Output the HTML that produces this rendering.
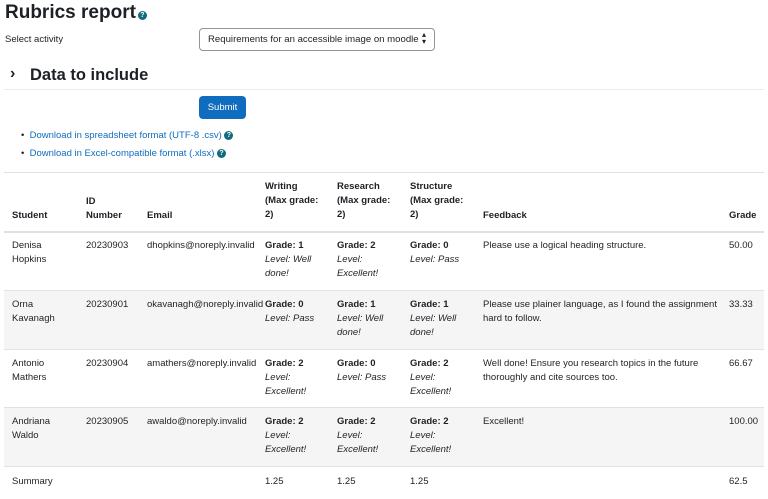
<!DOCTYPE html>
<html><head><style>
*{margin:0;padding:0;box-sizing:border-box}
body{width:768px;height:499px;overflow:hidden;background:#fff;font-family:"Liberation Sans",sans-serif;color:#1d2125;font-size:9.5px;position:relative}
.a{position:absolute;white-space:nowrap;line-height:14px}
b{font-weight:bold}
i{font-style:italic}
.hl{position:absolute;left:4px;width:760px;height:1px;background:#dee2e6}
.bg{position:absolute;left:4px;width:760px;background:#f5f5f5}
.q{display:inline-block;width:9px;height:9px;border-radius:50%;background:#0f6c7e;color:#fff;font-size:7px;line-height:9px;text-align:center;font-weight:bold;vertical-align:middle}
a{color:#0f6cbf;text-decoration:none}
</style></head><body>
<div class="a" style="left:5px;top:1px;font-size:19px;line-height:24px;font-weight:bold">Rubrics report<span class="q" style="margin-left:2px;vertical-align:1px">?</span></div>
<div class="a" style="left:5px;top:33px">Select activity</div>
<div style="position:absolute;left:199px;top:28px;width:236px;height:23px;border:1px solid #8f959e;border-radius:4px"></div>
<div class="a" style="left:208px;top:33px;font-size:9.6px">Requirements for an accessible image on moodle</div>
<div class="a" style="left:422px;top:31px;font-size:8px;line-height:8px">▴</div>
<div class="a" style="left:422px;top:38px;font-size:8px;line-height:8px">▾</div>
<div class="a" style="left:10px;top:63px;font-size:16px;line-height:22px;font-weight:bold">›</div>
<div class="a" style="left:30px;top:64px;font-size:16.5px;line-height:22px;font-weight:bold">Data to include</div>
<div class="hl" style="top:89px;background:#e9ecef"></div>
<div style="position:absolute;left:199px;top:96px;width:47px;height:23px;background:#0f6cbf;border-radius:4px;color:#fff;text-align:center;line-height:23px">Submit</div>
<div class="a" style="left:21px;top:129px">•&nbsp;&nbsp;<a>Download in spreadsheet format (UTF-8 .csv)</a> <span class="q">?</span></div>
<div class="a" style="left:21px;top:147px">•&nbsp;&nbsp;<a>Download in Excel-compatible format (.xlsx)</a> <span class="q">?</span></div>
<div class="hl" style="top:172px"></div>
<div class="hl" style="top:231px;height:2px"></div>
<div class="bg" style="top:291px;height:58px"></div>
<div class="bg" style="top:408px;height:58px"></div>
<div class="hl" style="top:290px"></div>
<div class="hl" style="top:349px"></div>
<div class="hl" style="top:407px"></div>
<div class="hl" style="top:466px"></div>
<div class="a" style="left:12px;top:209px"><b>Student</b></div>
<div class="a" style="left:86px;top:195px"><b>ID<br>Number</b></div>
<div class="a" style="left:147px;top:209px"><b>Email</b></div>
<div class="a" style="left:265px;top:180px"><b>Writing<br>(Max grade:<br>2)</b></div>
<div class="a" style="left:337px;top:180px"><b>Research<br>(Max grade:<br>2)</b></div>
<div class="a" style="left:410px;top:180px"><b>Structure<br>(Max grade:<br>2)</b></div>
<div class="a" style="left:483px;top:209px"><b>Feedback</b></div>
<div class="a" style="left:729px;top:209px"><b>Grade</b></div>
<div class="a" style="left:12px;top:239px">Denisa<br>Hopkins</div>
<div class="a" style="left:86px;top:239px">20230903</div>
<div class="a" style="left:147px;top:239px">dhopkins@noreply.invalid</div>
<div class="a" style="left:265px;top:239px"><b>Grade: 1</b><br><i>Level: Well<br>done!</i></div>
<div class="a" style="left:337px;top:239px"><b>Grade: 2</b><br><i>Level:<br>Excellent!</i></div>
<div class="a" style="left:410px;top:239px"><b>Grade: 0</b><br><i>Level: Pass</i></div>
<div class="a" style="left:483px;top:239px">Please use a logical heading structure.</div>
<div class="a" style="left:729px;top:239px">50.00</div>
<div class="a" style="left:12px;top:298px">Orna<br>Kavanagh</div>
<div class="a" style="left:86px;top:298px">20230901</div>
<div class="a" style="left:147px;top:298px">okavanagh@noreply.invalid</div>
<div class="a" style="left:265px;top:298px"><b>Grade: 0</b><br><i>Level: Pass</i></div>
<div class="a" style="left:337px;top:298px"><b>Grade: 1</b><br><i>Level: Well<br>done!</i></div>
<div class="a" style="left:410px;top:298px"><b>Grade: 1</b><br><i>Level: Well<br>done!</i></div>
<div class="a" style="left:483px;top:298px">Please use plainer language, as I found the assignment<br>hard to follow.</div>
<div class="a" style="left:729px;top:298px">33.33</div>
<div class="a" style="left:12px;top:357px">Antonio<br>Mathers</div>
<div class="a" style="left:86px;top:357px">20230904</div>
<div class="a" style="left:147px;top:357px">amathers@noreply.invalid</div>
<div class="a" style="left:265px;top:357px"><b>Grade: 2</b><br><i>Level:<br>Excellent!</i></div>
<div class="a" style="left:337px;top:357px"><b>Grade: 0</b><br><i>Level: Pass</i></div>
<div class="a" style="left:410px;top:357px"><b>Grade: 2</b><br><i>Level:<br>Excellent!</i></div>
<div class="a" style="left:483px;top:357px">Well done! Ensure you research topics in the future<br>thoroughly and cite sources too.</div>
<div class="a" style="left:729px;top:357px">66.67</div>
<div class="a" style="left:12px;top:415px">Andriana<br>Waldo</div>
<div class="a" style="left:86px;top:415px">20230905</div>
<div class="a" style="left:147px;top:415px">awaldo@noreply.invalid</div>
<div class="a" style="left:265px;top:415px"><b>Grade: 2</b><br><i>Level:<br>Excellent!</i></div>
<div class="a" style="left:337px;top:415px"><b>Grade: 2</b><br><i>Level:<br>Excellent!</i></div>
<div class="a" style="left:410px;top:415px"><b>Grade: 2</b><br><i>Level:<br>Excellent!</i></div>
<div class="a" style="left:483px;top:415px">Excellent!</div>
<div class="a" style="left:729px;top:415px">100.00</div>
<div class="a" style="left:12px;top:475px">Summary</div>
<div class="a" style="left:265px;top:475px">1.25</div>
<div class="a" style="left:337px;top:475px">1.25</div>
<div class="a" style="left:410px;top:475px">1.25</div>
<div class="a" style="left:729px;top:475px">62.5</div>
</body></html>
